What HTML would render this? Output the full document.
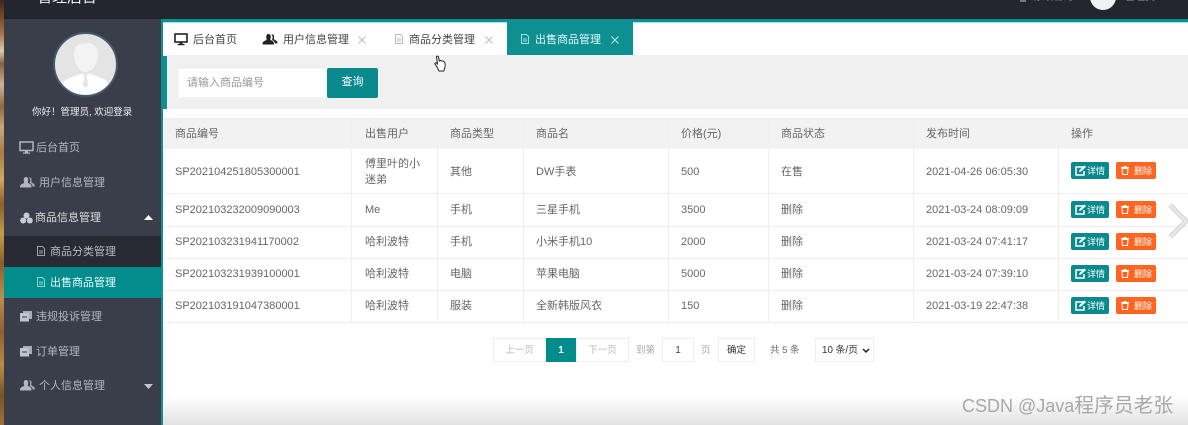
<!DOCTYPE html>
<html lang="zh"><head><meta charset="utf-8"><style>
html,body{margin:0;padding:0}
html{background:#fff}
body{width:1188px;height:425px;overflow:hidden;position:relative;font-family:"Liberation Sans","Noto Sans CJK SC",sans-serif;font-size:11px;color:#666;filter:blur(.35px)}
.a{position:absolute;white-space:nowrap}
.box{position:absolute}
.nav{position:absolute;color:#b3b6bd;font-size:11px;line-height:16px;white-space:nowrap;margin-top:1px}
.hl{position:absolute;background:#eeeeee;height:1px}
.vl{position:absolute;background:#efefef;width:1px;top:118px;height:204px}
.th,.td{position:absolute;white-space:nowrap;font-size:11px;line-height:16px;color:#666}
.btn{position:absolute;height:17px;border-radius:2px;color:#fff;font-size:9px;line-height:18px;white-space:nowrap}
.b1{left:1071px;width:38px;background:#0a8a8c}
.b2{left:1116px;width:40px;background:#ff6522}
.pg{position:absolute;top:338px;height:24px;box-sizing:border-box;border:1px solid #eee;background:#fff;text-align:center;font-size:9.5px;line-height:23px;color:#bbb;white-space:nowrap}
svg{position:absolute;overflow:visible}
</style></head><body>

<!-- textured strip -->
<svg style="left:0;top:0" width="4" height="425"><defs><linearGradient id="t" x1="0" y1="0" x2="0" y2="1">
<stop offset="0" stop-color="#3a2a20"/><stop offset=".04" stop-color="#7a4a28"/><stop offset=".08" stop-color="#a9744a"/><stop offset=".12" stop-color="#d9c9b4"/><stop offset=".15" stop-color="#8a6040"/><stop offset=".2" stop-color="#c9b49a"/><stop offset=".25" stop-color="#94673c"/><stop offset=".3" stop-color="#c8a878"/><stop offset=".36" stop-color="#a87a48"/><stop offset=".42" stop-color="#d0a860"/><stop offset=".48" stop-color="#8a5e2c"/><stop offset=".55" stop-color="#c49a50"/><stop offset=".62" stop-color="#8a5e2c"/><stop offset=".7" stop-color="#b98f50"/><stop offset=".78" stop-color="#8a6030"/><stop offset=".86" stop-color="#b98a48"/><stop offset=".93" stop-color="#7a5228"/><stop offset="1" stop-color="#a07038"/></linearGradient></defs><rect width="4" height="425" fill="url(#t)"/></svg>

<!-- top bar -->
<div class="box" style="left:4px;top:0;width:1184px;height:19px;background:#23262f"></div>
<div class="box" style="left:4px;top:19px;width:1184px;height:3px;background:#0e8f91"></div>
<div class="box" style="left:161px;top:22px;width:1027px;height:1px;background:#8feeea"></div>
<div class="a" style="left:37px;top:-12px;font-size:15px;line-height:20px;color:#f2f2f2">管理后台</div>
<div class="box" style="left:1020px;top:0;width:6px;height:2px;background:#777"></div>
<div class="a" style="left:1033px;top:-7px;font-size:10px;line-height:10px;color:#999">修改密码</div>
<div class="box" style="left:1090px;top:-16px;width:26px;height:26px;border-radius:50%;background:#f2f2f2"></div>
<div class="a" style="left:1125px;top:-7px;font-size:10px;line-height:10px;color:#999">管理员</div>

<!-- sidebar -->
<div class="box" style="left:4px;top:19px;width:157px;height:406px;background:#3a3e4b"></div>
<div class="box" style="left:161px;top:19px;width:2px;height:406px;background:#0e8f91"></div>

<svg style="left:53px;top:32px" width="65" height="65" viewBox="0 0 65 65">
<circle cx="32.500" cy="32.500" r="31.500" fill="#e4e4e4" stroke="#47586b" stroke-width="2"/>
<clipPath id="c"><circle cx="32.500" cy="32.500" r="30"/></clipPath>
<g clip-path="url(#c)">
<path d="M10 70V52c0-3 3-5 7-6l10-4h11l10 4c4 1 7 3 7 6v18z" fill="#fff"/>
<path d="M30.500 42h4l-.8 4 1.800 7-3 3-3-3 1.800-7z" fill="#e6e6e6"/>
<path d="M33 11c8 0 12 4 12 11 0 9-5 18-12 18s-12-9-12-18c0-7 4-11 12-11z" fill="#f3f3f3"/>
</g></svg>
<div class="a" style="left:32px;top:105px;font-size:9.500px;line-height:15px;color:#f0f0f0">你好！管理员, 欢迎登录</div>

<svg style="left:19px;top:141px" width="15" height="13" viewBox="0 0 15 13"><rect x="1" y="1" width="13" height="8.500" fill="none" stroke="#b3b6bd" stroke-width="1.500"/><rect x="6" y="10" width="3" height="1.500" fill="#b3b6bd"/><rect x="4" y="11.500" width="7" height="1.200" fill="#b3b6bd"/></svg>
<div class="nav" style="left:36px;top:139px">后台首页</div>

<svg style="left:20px;top:176px" width="15" height="12" viewBox="0 0 15 12"><path d="M0 11.500c0-3 1.500-3.500 3-4 1-.5 1.500-1 1-2C3.500 4 3.500 1 6 1s2.500 3 2 4.500c-.5 1 0 1.500 1 2 1.500.5 2.500 1 2.500 4z" fill="#b3b6bd"/><path d="M9 1.500c2-.5 3 1 2.500 3.500-.3 1 0 1.500 1 2 1.200.5 2.500 1 2.500 3.500h-2.500c-.3-2-1.500-3-3-3.500 .8-1.500 1-4-.5-5.500z" fill="#a3a6ad"/></svg>
<div class="nav" style="left:39px;top:174px">用户信息管理</div>

<svg style="left:20px;top:212px" width="13" height="12" viewBox="0 0 13 12"><circle cx="6.500" cy="3.500" r="3" fill="#c9ccd2"/><circle cx="3.200" cy="8.500" r="3" fill="#c9ccd2"/><circle cx="9.800" cy="8.500" r="3" fill="#c9ccd2"/></svg>
<div class="nav" style="left:35px;top:209px;color:#dcdde0">商品信息管理</div>
<svg style="left:144px;top:215px" width="9" height="5" viewBox="0 0 9 5"><path d="M0 5L4.500 0 9 5z" fill="#fff"/></svg>

<div class="box" style="left:4px;top:236px;width:157px;height:31px;background:#282b34"></div>
<svg style="left:37px;top:246px" width="8" height="10" viewBox="0 0 8 10"><path d="M.5.500h5l2 2v7h-7z" fill="none" stroke="#a0a3aa"/><path d="M2 5h4M2 7h4" stroke="#a0a3aa"/></svg>
<div class="nav" style="left:50px;top:243px;color:#b9bbc1">商品分类管理</div>

<div class="box" style="left:4px;top:267px;width:157px;height:31px;background:#038c8c"></div>
<svg style="left:37px;top:277px" width="8" height="10" viewBox="0 0 8 10"><path d="M.5.500h5l2 2v7h-7z" fill="none" stroke="#8ed6d6"/><path d="M2 5h4M2 7h4" stroke="#8ed6d6"/></svg>
<div class="nav" style="left:50px;top:274px;color:#e8fbfb">出售商品管理</div>

<svg style="left:20px;top:310px" width="12" height="12" viewBox="0 0 12 12"><path d="M3 1h9v8H3z" fill="#a9acb3"/><path d="M0 3h9v8.500H0z" fill="#c2c4ca"/><path d="M2 7h5" stroke="#3a3e4b"/></svg>
<div class="nav" style="left:36px;top:308px">违规投诉管理</div>

<svg style="left:20px;top:345px" width="12" height="12" viewBox="0 0 12 12"><path d="M3 1h9v8H3z" fill="#a9acb3"/><path d="M0 3h9v8.500H0z" fill="#c2c4ca"/><path d="M2 7h5" stroke="#3a3e4b"/></svg>
<div class="nav" style="left:36px;top:343px">订单管理</div>

<svg style="left:20px;top:379px" width="15" height="12" viewBox="0 0 15 12"><path d="M0 11.500c0-3 1.500-3.500 3-4 1-.5 1.500-1 1-2C3.500 4 3.500 1 6 1s2.500 3 2 4.500c-.5 1 0 1.500 1 2 1.500.5 2.500 1 2.500 4z" fill="#b3b6bd"/><path d="M9 1.500c2-.5 3 1 2.500 3.500-.3 1 0 1.500 1 2 1.200.5 2.500 1 2.500 3.500h-2.500c-.3-2-1.500-3-3-3.500 .8-1.500 1-4-.5-5.500z" fill="#a3a6ad"/></svg>
<div class="nav" style="left:39px;top:377px">个人信息管理</div>
<svg style="left:144px;top:384px" width="9" height="5" viewBox="0 0 9 5"><path d="M0 0L4.500 5 9 0z" fill="#c4c6cb"/></svg>

<!-- tabs -->
<svg style="left:174px;top:33px" width="14" height="13" viewBox="0 0 14 13"><rect x="1" y="1" width="12" height="8" fill="none" stroke="#222" stroke-width="1.600"/><rect x="5.500" y="9.500" width="3" height="1.500" fill="#222"/><rect x="3.500" y="11" width="7" height="1.200" fill="#222"/></svg>
<div class="a" style="left:193px;top:32px;font-size:11px;line-height:16px;color:#444">后台首页</div>
<svg style="left:262px;top:33px" width="16" height="12" viewBox="0 0 15 12"><path d="M0 11.500c0-3 1.500-3.500 3-4 1-.5 1.500-1 1-2C3.500 4 3.500 1 6 1s2.500 3 2 4.500c-.5 1 0 1.500 1 2 1.500.5 2.500 1 2.500 4z" fill="#222"/><path d="M9 1.500c2-.5 3 1 2.500 3.500-.3 1 0 1.500 1 2 1.200.5 2.500 1 2.500 3.500h-2.500c-.3-2-1.500-3-3-3.500 .8-1.500 1-4-.5-5.500z" fill="#222"/></svg>
<div class="a" style="left:283px;top:32px;font-size:11px;line-height:16px;color:#444">用户信息管理</div>
<svg style="left:358px;top:36px" width="8" height="8" viewBox="0 0 8 8"><path d="M.5.500l7 7M7.500.500l-7 7" stroke="#bbb"/></svg>
<svg style="left:395px;top:34px" width="8" height="10" viewBox="0 0 8 10"><path d="M.5.500h5l2 2v7h-7z" fill="none" stroke="#bbb"/><path d="M2 5h4M2 7h4" stroke="#bbb"/></svg>
<div class="a" style="left:409px;top:32px;font-size:11px;line-height:16px;color:#444">商品分类管理</div>
<svg style="left:485px;top:36px" width="8" height="8" viewBox="0 0 8 8"><path d="M.5.500l7 7M7.500.500l-7 7" stroke="#bbb"/></svg>
<div class="box" style="left:507px;top:22px;width:126px;height:33px;background:#0e8f91"></div>
<svg style="left:521px;top:34px" width="8" height="10" viewBox="0 0 8 10"><path d="M.5.500h5l2 2v7h-7z" fill="none" stroke="#a8dcdc"/><path d="M2 5h4M2 7h4" stroke="#a8dcdc"/></svg>
<div class="a" style="left:535px;top:32px;font-size:11px;line-height:16px;color:#e6f8f8">出售商品管理</div>
<svg style="left:611px;top:36px" width="8" height="8" viewBox="0 0 8 8"><path d="M.5.500l7 7M7.500.500l-7 7" stroke="#bfe6e6"/></svg>

<!-- search bar -->
<div class="box" style="left:163px;top:55px;width:1025px;height:54px;background:#f0f0f0"></div>
<div class="box" style="left:163px;top:56px;width:4px;height:53px;background:#0e8f91"></div>
<div class="box" style="left:178px;top:68px;width:149px;height:30px;background:#fff;box-sizing:border-box;border:1px solid #f4f4f4"></div>
<div class="a" style="left:187px;top:75px;font-size:11px;line-height:16px;color:#999">请输入商品编号</div>
<div class="box" style="left:327px;top:68px;width:51px;height:30px;background:#0a8a8c;border-radius:2px;color:#fff;font-size:11px;line-height:29px;text-align:center">查询</div>
<!-- cursor -->
<svg style="left:434px;top:55px" width="12" height="17" viewBox="0 0 12 17"><path d="M2.500 1.500c.8-.8 1.800-.3 2 .5l.8 4 1.200-.5 1 .5 1.500 0 1.500 1c.8 1.500.8 4 .2 6l-1 3H5l-2-4-2-3c-.3-1 .5-1.500 1.500-1l1 1z" fill="#fff" stroke="#222" stroke-width="1"/></svg>

<!-- table -->
<div class="box" style="left:163px;top:118px;width:1025px;height:31px;background:#f2f2f2"></div>
<div class="hl" style="left:163px;top:118px;width:1025px"></div>
<div class="hl" style="left:163px;top:193px;width:1025px"></div>
<div class="hl" style="left:163px;top:226px;width:1025px"></div>
<div class="hl" style="left:163px;top:258px;width:1025px"></div>
<div class="hl" style="left:163px;top:290px;width:1025px"></div>
<div class="hl" style="left:163px;top:322px;width:1025px"></div>
<div class="vl" style="left:351px"></div><div class="vl" style="left:437px"></div><div class="vl" style="left:523px"></div><div class="vl" style="left:668px"></div><div class="vl" style="left:768px"></div><div class="vl" style="left:913px"></div><div class="vl" style="left:1058px"></div>

<div class="th" style="left:175px;top:126px">商品编号</div><div class="th" style="left:365px;top:126px">出售用户</div><div class="th" style="left:450px;top:126px">商品类型</div><div class="th" style="left:536px;top:126px">商品名</div><div class="th" style="left:681px;top:126px">价格(元)</div><div class="th" style="left:781px;top:126px">商品状态</div><div class="th" style="left:926px;top:126px">发布时间</div><div class="th" style="left:1071px;top:126px">操作</div>

<div class="td" style="left:175px;top:164px">SP202104251805300001</div><div class="td" style="left:365px;top:156px;line-height:16px">傅里叶的小<br>迷弟</div><div class="td" style="left:450px;top:164px">其他</div><div class="td" style="left:536px;top:164px">DW手表</div><div class="td" style="left:681px;top:164px">500</div><div class="td" style="left:781px;top:164px">在售</div><div class="td" style="left:926px;top:164px">2021-04-26 06:05:30</div>

<div class="td" style="left:175px;top:202px">SP202103232009090003</div><div class="td" style="left:365px;top:202px">Me</div><div class="td" style="left:450px;top:202px">手机</div><div class="td" style="left:536px;top:202px">三星手机</div><div class="td" style="left:681px;top:202px">3500</div><div class="td" style="left:781px;top:202px">删除</div><div class="td" style="left:926px;top:202px">2021-03-24 08:09:09</div>

<div class="td" style="left:175px;top:234px">SP202103231941170002</div><div class="td" style="left:365px;top:234px">哈利波特</div><div class="td" style="left:450px;top:234px">手机</div><div class="td" style="left:536px;top:234px">小米手机10</div><div class="td" style="left:681px;top:234px">2000</div><div class="td" style="left:781px;top:234px">删除</div><div class="td" style="left:926px;top:234px">2021-03-24 07:41:17</div>

<div class="td" style="left:175px;top:266px">SP202103231939100001</div><div class="td" style="left:365px;top:266px">哈利波特</div><div class="td" style="left:450px;top:266px">电脑</div><div class="td" style="left:536px;top:266px">苹果电脑</div><div class="td" style="left:681px;top:266px">5000</div><div class="td" style="left:781px;top:266px">删除</div><div class="td" style="left:926px;top:266px">2021-03-24 07:39:10</div>

<div class="td" style="left:175px;top:298px">SP202103191047380001</div><div class="td" style="left:365px;top:298px">哈利波特</div><div class="td" style="left:450px;top:298px">服装</div><div class="td" style="left:536px;top:298px">全新韩版风衣</div><div class="td" style="left:681px;top:298px">150</div><div class="td" style="left:781px;top:298px">删除</div><div class="td" style="left:926px;top:298px">2021-03-19 22:47:38</div>

<!-- buttons -->
<div class="btn b1" style="top:162px"><span style="position:absolute;left:16px">详情</span><svg style="left:4px;top:3px" width="12" height="11" viewBox="0 0 12 11"><path d="M9 2H1v8h8V6" fill="none" stroke="#fff" stroke-width="1.500"/><path d="M4 7l.5-2L9.500.5l1.500 1.500L6 6.500z" fill="#fff"/></svg></div>
<div class="btn b2" style="top:162px"><span style="position:absolute;left:18px">删除</span><svg style="left:5px;top:4px" width="8" height="9" viewBox="0 0 8 9"><path d="M0 1.500h8M3 1.500V.500h2v1M1 2.500h6l-.5 6h-5z" fill="none" stroke="#fff"/></svg></div>
<div class="btn b1" style="top:201px"><span style="position:absolute;left:16px">详情</span><svg style="left:4px;top:3px" width="12" height="11" viewBox="0 0 12 11"><path d="M9 2H1v8h8V6" fill="none" stroke="#fff" stroke-width="1.500"/><path d="M4 7l.5-2L9.500.5l1.500 1.500L6 6.500z" fill="#fff"/></svg></div>
<div class="btn b2" style="top:201px"><span style="position:absolute;left:18px">删除</span><svg style="left:5px;top:4px" width="8" height="9" viewBox="0 0 8 9"><path d="M0 1.500h8M3 1.500V.500h2v1M1 2.500h6l-.5 6h-5z" fill="none" stroke="#fff"/></svg></div>
<div class="btn b1" style="top:233px"><span style="position:absolute;left:16px">详情</span><svg style="left:4px;top:3px" width="12" height="11" viewBox="0 0 12 11"><path d="M9 2H1v8h8V6" fill="none" stroke="#fff" stroke-width="1.500"/><path d="M4 7l.5-2L9.500.5l1.500 1.500L6 6.500z" fill="#fff"/></svg></div>
<div class="btn b2" style="top:233px"><span style="position:absolute;left:18px">删除</span><svg style="left:5px;top:4px" width="8" height="9" viewBox="0 0 8 9"><path d="M0 1.500h8M3 1.500V.500h2v1M1 2.500h6l-.5 6h-5z" fill="none" stroke="#fff"/></svg></div>
<div class="btn b1" style="top:265px"><span style="position:absolute;left:16px">详情</span><svg style="left:4px;top:3px" width="12" height="11" viewBox="0 0 12 11"><path d="M9 2H1v8h8V6" fill="none" stroke="#fff" stroke-width="1.500"/><path d="M4 7l.5-2L9.500.5l1.500 1.500L6 6.500z" fill="#fff"/></svg></div>
<div class="btn b2" style="top:265px"><span style="position:absolute;left:18px">删除</span><svg style="left:5px;top:4px" width="8" height="9" viewBox="0 0 8 9"><path d="M0 1.500h8M3 1.500V.500h2v1M1 2.500h6l-.5 6h-5z" fill="none" stroke="#fff"/></svg></div>
<div class="btn b1" style="top:297px"><span style="position:absolute;left:16px">详情</span><svg style="left:4px;top:3px" width="12" height="11" viewBox="0 0 12 11"><path d="M9 2H1v8h8V6" fill="none" stroke="#fff" stroke-width="1.500"/><path d="M4 7l.5-2L9.500.5l1.500 1.500L6 6.500z" fill="#fff"/></svg></div>
<div class="btn b2" style="top:297px"><span style="position:absolute;left:18px">删除</span><svg style="left:5px;top:4px" width="8" height="9" viewBox="0 0 8 9"><path d="M0 1.500h8M3 1.500V.500h2v1M1 2.500h6l-.5 6h-5z" fill="none" stroke="#fff"/></svg></div>

<!-- chevron -->
<svg style="left:1166px;top:202px" width="22" height="38" viewBox="0 0 22 38"><path d="M4 3l16 16L4 35" fill="none" stroke="#dadada" stroke-width="5"/><path d="M4 3l16 16L4 35" fill="none" stroke="#eeeeee" stroke-width="1.500"/></svg>

<!-- bottom gradient -->
<div class="box" style="left:163px;top:396px;width:1025px;height:29px;background:linear-gradient(#fff,#e2e2e2)"></div>

<!-- pagination -->
<div class="pg" style="left:493px;width:53px">上一页</div>
<div class="pg" style="left:546px;width:30px;background:#038c8c;border-color:#038c8c;color:#fff;font-weight:bold;font-size:10px">1</div>
<div class="pg" style="left:576px;width:53px">下一页</div>
<div class="a" style="left:636px;top:344px;font-size:9.500px;line-height:13px;color:#aaa">到第</div>
<div class="pg" style="left:662px;width:32px;color:#444;font-size:10px">1</div>
<div class="a" style="left:701px;top:344px;font-size:9.500px;line-height:13px;color:#aaa">页</div>
<div class="pg" style="left:718px;width:37px;color:#333">确定</div>
<div class="a" style="left:770px;top:344px;font-size:9.500px;line-height:13px;color:#666">共 5 条</div>
<div class="pg" style="left:815px;width:59px;color:#333;text-align:left;padding-left:6px;font-size:9.800px">10 条/页</div>
<svg style="left:862px;top:348px" width="8" height="5" viewBox="0 0 8 5"><path d="M1 1l3 3 3-3" fill="none" stroke="#222" stroke-width="1.500"/></svg>

<!-- watermark -->
<div class="a" style="left:962px;top:396px;font-size:18px;line-height:20px;color:#a8a8a8">CSDN @Java<span style="font-size:19.800px">程序员老张</span></div>

</body></html>
